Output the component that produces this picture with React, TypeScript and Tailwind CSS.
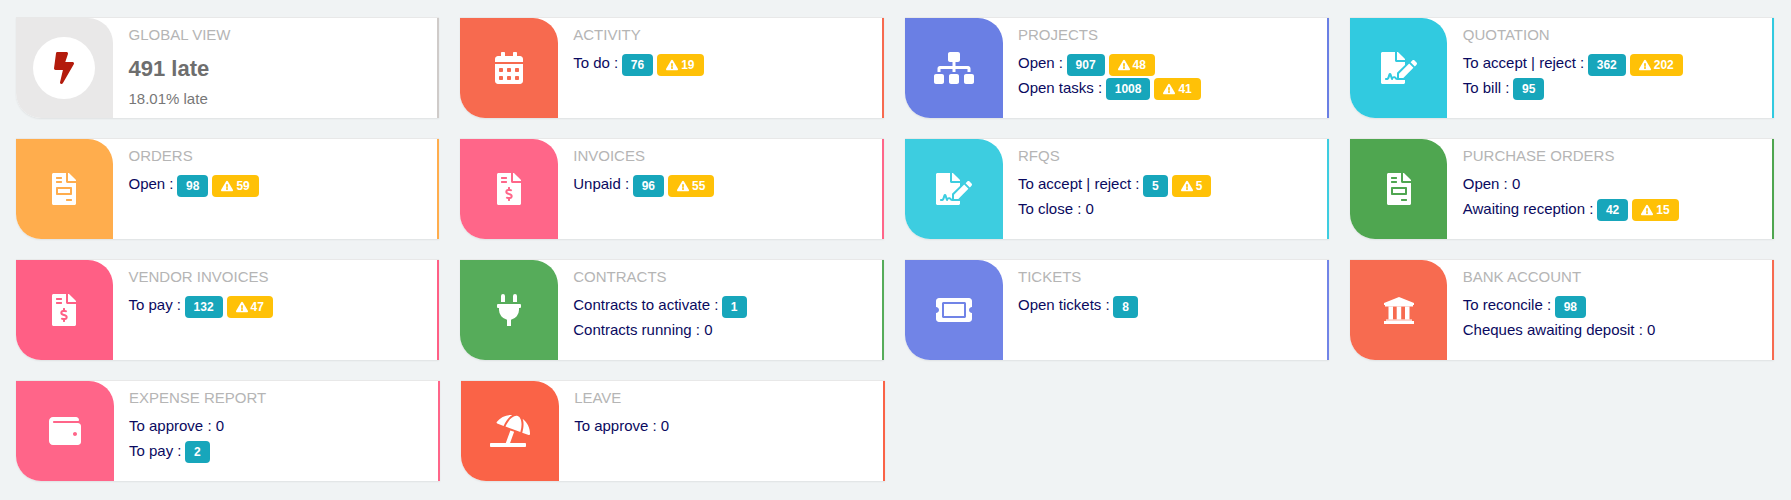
import React from "react";
import {
  FaBolt, FaCalendarAlt, FaSitemap, FaFileSignature, FaFileInvoice, FaFileInvoiceDollar,
  FaPlug, FaTicketAlt, FaWallet, FaUmbrellaBeach, FaExclamationTriangle,
} from "react-icons/fa";

type Line = { label: string; count?: number; late?: number };
type Card = { title: string; color: string; Icon: React.ComponentType<{ className?: string }>; size: string; lines: Line[] };

const Bank = ({ className }: { className?: string }) => (
  <svg viewBox="0 0 30 27" className={className} fill="currentColor">
    <path d="M15 0 L30 6 V8 H0 V6 Z" />
    <rect x="1" y="8" width="28" height="1.5" />
    <rect x="4.5" y="9.5" width="4.5" height="13" />
    <rect x="12.7" y="9.5" width="4.5" height="13" />
    <rect x="21" y="9.5" width="4.5" height="13" />
    <rect x="2" y="22.5" width="26" height="1.2" />
    <rect x="0" y="24" width="30" height="3" />
  </svg>
);

const Badge = ({ n }: { n: number }) => (
  <span className="ml-[3.5px] mt-[3px] inline-flex h-[22px] items-center rounded-[4px] bg-[#17a6bb] px-[9px] text-[12px] font-bold text-white">{n}</span>
);
const Warn = ({ n }: { n: number }) => (
  <span className="ml-[4px] mt-[3px] inline-flex h-[22px] items-center gap-[3px] rounded-[4px] bg-[#ffc107] px-[9px] text-[12px] font-bold text-white">
    <FaExclamationTriangle className="h-[12px] w-[12px]" />
    {n}
  </span>
);

const Row = ({ line }: { line: Line }) => (
  <div className="flex h-[24.5px] items-center whitespace-nowrap text-[15px] text-[#0a0a60]">
    <span>{line.label} :{line.count === undefined ? " 0" : ""}</span>
    {line.count !== undefined && <Badge n={line.count} />}
    {line.late !== undefined && <Warn n={line.late} />}
  </div>
);

const Shell = ({ accent, bg, children, icon }: { accent: string; bg: string; children: React.ReactNode; icon: React.ReactNode }) => (
  <div className="flex h-[101px] rounded-bl-[25px] border-t border-[#e8e8e8] bg-white shadow-[0_1px_2px_rgba(0,0,0,0.07)]">
    <div className="flex h-[100px] w-[97.5px] shrink-0 items-center justify-center rounded-tr-[25px] rounded-bl-[25px]" style={{ backgroundColor: bg }}>
      {icon}
    </div>
    <div className="min-w-0 flex-1 pl-[15.5px] pt-[6px]">{children}</div>
    <div className="h-[100px] w-[2px] shrink-0" style={{ backgroundColor: accent }} />
  </div>
);

const Title = ({ t }: { t: string }) => (
  <div className="h-[22px] text-[15px] leading-[22px] uppercase text-[#b5b5b5]">{t}</div>
);

const Tile = ({ card }: { card: Card }) => (
  <Shell accent={card.color} bg={card.color} icon={<card.Icon className={`${card.size} text-white`} />}>
    <Title t={card.title} />
    <div className="mt-[5px]">
      {card.lines.map((l) => <Row key={l.label} line={l} />)}
    </div>
  </Shell>
);

const cards: Card[] = [
  { title: "Activity", color: "#f76a4f", Icon: FaCalendarAlt, size: "h-[32px] w-[28px]", lines: [{ label: "To do", count: 76, late: 19 }] },
  { title: "Projects", color: "#6a7fe4", Icon: FaSitemap, size: "h-[32px] w-[40px]", lines: [{ label: "Open", count: 907, late: 48 }, { label: "Open tasks", count: 1008, late: 41 }] },
  { title: "Quotation", color: "#31cae0", Icon: FaFileSignature, size: "h-[32px] w-[36px]", lines: [{ label: "To accept | reject", count: 362, late: 202 }, { label: "To bill", count: 95 }] },
  { title: "Orders", color: "#ffad4d", Icon: FaFileInvoice, size: "h-[32px] w-[24px]", lines: [{ label: "Open", count: 98, late: 59 }] },
  { title: "Invoices", color: "#ff6689", Icon: FaFileInvoiceDollar, size: "h-[32px] w-[24px]", lines: [{ label: "Unpaid", count: 96, late: 55 }] },
  { title: "RFQs", color: "#3dcde0", Icon: FaFileSignature, size: "h-[32px] w-[36px]", lines: [{ label: "To accept | reject", count: 5, late: 5 }, { label: "To close" }] },
  { title: "Purchase orders", color: "#4fa650", Icon: FaFileInvoice, size: "h-[32px] w-[24px]", lines: [{ label: "Open" }, { label: "Awaiting reception", count: 42, late: 15 }] },
  { title: "Vendor invoices", color: "#ff5f85", Icon: FaFileInvoiceDollar, size: "h-[32px] w-[24px]", lines: [{ label: "To pay", count: 132, late: 47 }] },
  { title: "Contracts", color: "#56ac5a", Icon: FaPlug, size: "h-[32px] w-[24px]", lines: [{ label: "Contracts to activate", count: 1 }, { label: "Contracts running" }] },
  { title: "Tickets", color: "#7184e7", Icon: FaTicketAlt, size: "h-[32px] w-[36px]", lines: [{ label: "Open tickets", count: 8 }] },
  { title: "Bank account", color: "#f76b50", Icon: Bank, size: "h-[27px] w-[30px]", lines: [{ label: "To reconcile", count: 98 }, { label: "Cheques awaiting deposit" }] },
];
const lastRow: Card[] = [
  { title: "Expense report", color: "#ff6589", Icon: FaWallet, size: "h-[32px] w-[32px]", lines: [{ label: "To approve" }, { label: "To pay", count: 2 }] },
  { title: "Leave", color: "#fa6347", Icon: FaUmbrellaBeach, size: "h-[32px] w-[40px]", lines: [{ label: "To approve" }] },
];

export default function App() {
  return (
    <div className="h-[500px] w-[1791px] overflow-hidden bg-[#f0f3f4] pl-[15.5px] pt-[17px] font-['Liberation_Sans',Arial,sans-serif]">
      <div className="grid w-[1758px] grid-cols-4 gap-x-[21px] gap-y-[20px]">
        <Shell
          accent="#cfcbc9"
          bg="#e9e8e8"
          icon={
            <div className="flex h-[62px] w-[62px] items-center justify-center rounded-full bg-white">
              <FaBolt className="h-[32px] w-[20px] text-[#b31b0c]" />
            </div>
          }
        >
          <Title t="Global view" />
          <div className="mt-[9px] h-[28px] text-[22px] font-bold leading-[28px] text-[#6e6e6e]">491 late</div>
          <div className="mt-[6px] text-[15px] leading-[20px] text-[#777777]">18.01% late</div>
        </Shell>
        {cards.map((c) => <Tile key={c.title} card={c} />)}
      </div>
      <div className="mt-[20px] grid w-[1760px] grid-cols-4 gap-x-[21px] pl-[0.5px]">
        {lastRow.map((c) => <Tile key={c.title} card={c} />)}
      </div>
    </div>
  );
}
